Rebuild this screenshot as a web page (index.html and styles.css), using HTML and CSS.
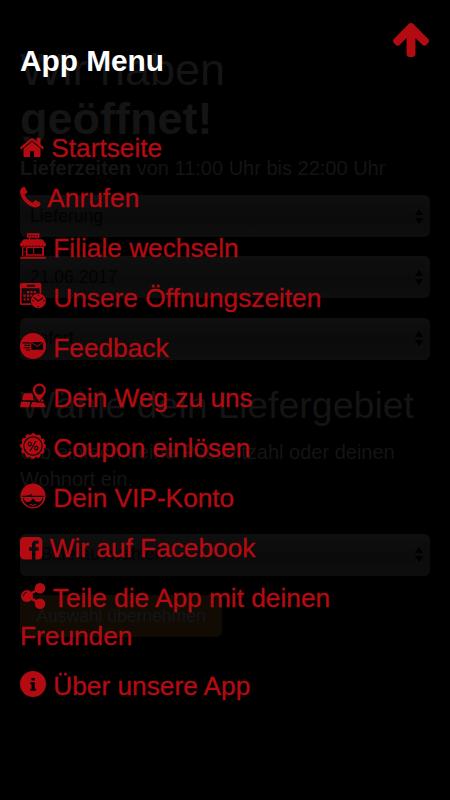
FILE: index.html
```html
<!DOCTYPE html>
<html lang="de">
<head>
<meta charset="utf-8">
<title>App Menu</title>
<link rel="stylesheet" href="styles.css">
</head>
<body>
<main class="page">
  <h1 class="headline">Wir haben <b>geöffnet!</b></h1>
  <p class="hours"><b>Lieferzeiten</b> von 11:00 Uhr bis 22:00 Uhr</p>
  <div class="select"><span>Lieferung</span><i class="arrows"></i></div>
  <div class="select"><span>21.06.2017</span><i class="arrows"></i></div>
  <div class="select"><span>sofort</span><i class="arrows"></i></div>
  <h2 class="subline">Wähle dein Liefergebiet</h2>
  <p class="hint">Gib einfach deine Postleitzahl oder deinen Wohnort ein.</p>
  <div class="select"><span>- Bitte auswählen</span><i class="arrows"></i></div>
  <div class="button">Auswahl übernehmen</div>
</main>
<nav class="menu">
  <div class="close"><svg viewBox="117 192 1558 1472"><path d="M1675 971q0 51-37 90l-75 75q-38 38-91 38-54 0-90-38l-294-293v704q0 52-37.5 84.5t-90.5 32.5h-128q-53 0-90.5-32.5t-37.5-84.5v-704l-294 293q-36 38-90 38t-90-38l-75-75q-38-38-38-90 0-53 38-91l651-651q35-37 90-37 54 0 91 37l651 651q37 39 37 91z"/></svg></div>
  <h3 class="title">App Menu</h3>
  <ul class="list">
    <li><svg class="home" viewBox="97 253 1598 1283"><path d="M1472 992v480q0 26-19 45t-45 19h-384v-384h-256v384h-384q-26 0-45-19t-19-45v-480q0-1 .5-3t.5-3l575-474 575 474q1 2 1 6zm223-69l-62 74q-8 9-21 11h-3q-13 0-21-7l-692-577-692 577q-12 8-24 7-13-2-21-11l-62-74q-8-10-7-23.5t11-21.5l719-599q32-26 76-26t76 26l244 204v-195q0-14 9-23t23-9h192q14 0 23 9t9 23v408l219 182q10 8 11 21.5t-7 23.5z"/></svg> Startseite</li>
    <li><svg class="phone" viewBox="192 128 1408 1408"><path d="M1600 1240q0 27-10 70.5t-21 68.5q-21 50-122 106-94 51-186 51-27 0-53-3.5t-57.5-12.5-47-14.5-55.5-20.5-49-18q-98-35-175-83-127-79-264-216t-216-264q-48-77-83-175-3-9-18-49t-20.5-55.5-14.5-47-12.5-57.5-3.5-53q0-92 51-186 56-101 106-122 25-11 68.5-21t70.5-10q14 0 21 3 18 6 53 76 11 19 30 54t35 63.5 31 53.5q3 4 17.5 25t21.5 35.5 7 28.5q0 20-28.5 50t-62 55-62 53-28.5 46q0 9 5 22.5t8.5 20.5 14 24 11.5 19q76 137 174 235t235 174q2 1 19 11.5t24 14 20.5 8.5 22.5 5q18 0 46-28.5t53-62 55-62 50-28.5q14 0 28.5 7t35.5 21.5 25 17.5q25 15 53.5 31t63.5 35 54 30q70 35 76 53 3 7 3 21z"/></svg> Anrufen</li>
    <li><svg viewBox="0 0 26 26"><path fill-rule="evenodd" d="M7 .3h12.5v4.5H7zM8.5 1.9v1.3h1.4V1.9zm2.6 0v1.3h1.3V1.9zm2.6 0v1.3H15V1.9zm2.6 0v1.3h1.3V1.9z"/><path d="M9 4.5h1v2H9zM16.5 4.5h1v2h-1zM3.5 6.3h19L26 11v1a1.7 1.7 0 0 1-3.3.3 1.8 1.8 0 0 1-3.3 0 1.8 1.8 0 0 1-3.2 0 1.8 1.8 0 0 1-3.2 0 1.8 1.8 0 0 1-3.2 0 1.8 1.8 0 0 1-3.2 0 1.8 1.8 0 0 1-3.3 0A1.7 1.7 0 0 1 0 12v-1z"/><path fill-rule="evenodd" d="M2 13.500h22v9.300H2zM3.400 14.600v8H6v-8zM7.600 15v6.200H22V15z"/><path d="M13.200 15h1v6h-1zM4.600 18h1v1.400h-1zM.3 23.800h25.400v2H.3z"/></svg> Filiale wechseln</li>
    <li><svg viewBox="0 0 26 26"><path fill-rule="evenodd" d="M1.500 0H20q1.300 0 1.300 1.500V22H1.500Q0 22 0 20.500v-19Q0 0 1.500 0zM7 1.800v2h8v-2zM1.600 5.300v15h18v-15z"/><path d="M7 8h2.200v2.200H7zm3.300 0h2.200v2.200h-2.200zm3.400 0h2.200v2.200h-2.200zM3.500 11.500h2.200v2.200H3.500zm3.500 0h2.200v2.200H7zm3.300 0h2.200v2.200h-2.200zM3.500 15.200h2.200v2.200H3.500zm3.500 0h2.200v2.200H7z"/><circle class="gap" cx="18.400" cy="17.700" r="8"/><circle cx="18.400" cy="17.700" r="7.500"/><path class="cut" d="m13.800 14.300 4.300 3.700 5-3.300M18.400 11.500v1.200M18.400 23v1.200M12.300 17.700h1.200M23.300 17.700h1.200"/></svg> Unsere Öffnungszeiten</li>
    <li><svg viewBox="0 0 26 26"><circle cx="13" cy="13" r="13"/><path class="cut" d="M2.500 9.900h7.800M4.200 12.300h6M3.400 14.700h6.800M6 17h4"/><path class="gap" d="M11.200 9h12v7.800h-12z"/><path class="smile" d="m11.300 9 5.900 4.600L23.100 9"/></svg> Feedback</li>
    <li><svg viewBox="0 0 26 26"><path d="M4 10.200h8.500l1.300 7.200-12-.7zM1.100 18.500l9.400.5-1.400 5.300H0zM12 19.100l11.800.8L26 24.300H10.500zM21.500 16.200l1.600.1.800 2.400-3.200-.2z"/><path class="gap" d="M19.200 20 13 9.500a7 7 0 1 1 12.700 0z"/><path fill-rule="evenodd" d="M19.200 19.300c-.8-3.800-6.300-7-6.300-12.300a6.500 6.500 0 1 1 13 0c0 5.300-5.700 8.500-6.700 12.300zM19.400 2.800a4.300 4.300 0 1 0 0 8.600 4.300 4.300 0 0 0 0-8.600z"/></svg> Dein Weg zu uns</li>
    <li><svg viewBox="0 0 26 26"><circle cx="13" cy="13" r="11.400"/><circle class="scallop" cx="13" cy="13" r="10.700"/><circle class="cut" cx="13" cy="13" r="9.200"/><path class="cut" d="m16 8-6 10"/><ellipse class="cut" cx="9.700" cy="11" rx="1.600" ry="2"/><ellipse class="cut" cx="16.300" cy="15.100" rx="1.600" ry="2"/></svg> Coupon einlösen</li>
    <li><svg viewBox="0 0 26 26"><circle cx="13" cy="13" r="12.500"/><path class="gap" d="M2.200 12.700H6q4-.3 6.500-2.200-.5 1.400-1.500 2.200h12.800l-.5 3a10.500 10.500 0 0 1-20.600 0z"/><path d="M2 14h22v1.200h-1.800c-.5 2.500-1.500 3.800-3.800 3.800-2.600 0-4-1.300-4.600-3.300h-1.500C11.700 17.700 10.400 19 7.900 19c-2.400 0-3.500-1.300-4-3.800H2z"/><path class="smile" d="M9.800 21.300q3.300 2 6.500 0"/></svg> Dein VIP-Konto</li>
    <li><svg class="facebook" viewBox="128 128 1536 1536"><path d="M1376 128q119 0 203.500 84.500t84.500 203.500v960q0 119-84.500 203.500t-203.500 84.500h-188v-595h199l30-232h-229v-148q0-56 23.500-84t91.500-28l122-1v-207q-63-9-178-9-136 0-217.500 80t-81.500 226v171h-200v232h200v595h-532q-119 0-203.500-84.500t-84.500-203.500v-960q0-119 84.500-203.500t203.500-84.500h960z"/></svg> Wir auf Facebook</li>
    <li><svg viewBox="0 0 26 26"><path class="link" d="M20 5.200 7 12.900l13 7.800"/><circle cx="20" cy="5.300" r="5.300"/><circle cx="20" cy="20.800" r="5.300"/><circle cx="7" cy="12.900" r="6"/><path class="shine" d="M3.400 13.200q0-3.500 3.300-4"/></svg> Teile die App mit deinen Freunden</li>
    <li><svg viewBox="0 0 26 26"><circle cx="13" cy="13" r="13"/><path class="gap" d="M11.500 6.900h3.300v2.700h-3.300zM10.200 11.300h4.600v6.500h1.300v1.900h-5.900v-1.900h1.300v-4.600h-1.300z"/></svg> Über unsere App</li>
  </ul>
</nav>
</body>
</html>
```

FILE: styles.css
```css
* { box-sizing: border-box; }

body {
  margin: 0;
  height: 800px;
  overflow: hidden;
  position: relative;
  background: #000;
  font-family: "Liberation Sans", Arial, sans-serif;
}

.page {
  padding: 45px 20px 0;
  color: #141414;
}

.headline {
  margin: 0;
  font-size: 45px;
  line-height: 49px;
  font-weight: 400;
}

.headline b { display: block; }

.hours {
  margin: 11px 0 13px;
  font-size: 20px;
  line-height: 28px;
  white-space: nowrap;
}

.select {
  display: flex;
  align-items: center;
  justify-content: space-between;
  height: 42px;
  margin-bottom: 19.3px;
  padding: 0 7px 0 10px;
  border-radius: 6px;
  background: linear-gradient(#0f0f0f, #0b0b0b 55%, #0e0e0e);
  color: #020202;
  font-size: 17.5px;
}

.arrows {
  display: flex;
  flex-direction: column;
  gap: 3px;
}

.arrows::before,
.arrows::after {
  content: "";
  border: 4px solid transparent;
}

.arrows::before { border-top: 0; border-bottom: 6px solid #000; }
.arrows::after { border-bottom: 0; border-top: 6px solid #000; }

.subline {
  margin: 25px 0 0;
  font-size: 37.5px;
  line-height: 41px;
  font-weight: 400;
  white-space: nowrap;
}

.hint {
  margin: 13px 0 40px;
  font-size: 20px;
  line-height: 27.5px;
}

.button {
  width: 202px;
  height: 42px;
  border-radius: 5px;
  background: #110b04;
  color: #14161a;
  font-size: 17.5px;
  line-height: 43px;
  text-align: center;
}

.menu {
  position: absolute;
  inset: 0;
  padding: 23px 20px 0;
  color: #b40b12;
}

.close {
  display: flex;
  justify-content: flex-end;
  height: 21px;
  padding-right: 1px;
}

.close svg {
  flex: none;
  width: 36px;
  height: 34px;
}

.title {
  margin: 0 0 52.4px;
  color: #fff;
  font-size: 29.8px;
  line-height: 34px;
}

.list {
  margin: 0;
  padding: 0;
  list-style: none;
  font-size: 26.25px;
  line-height: 37.14px;
  -webkit-text-stroke: 0.35px #b40b12;
}

.list li { margin-bottom: 12.86px; }

svg { fill: #b40b12; overflow: visible; }

.list svg {
  width: 26px;
  height: 26px;
  vertical-align: -2px;
}

.list .home { width: 24px; height: 19px; vertical-align: 0; }
.list .phone { width: 20.5px; height: 20.5px; margin-right: 1px; vertical-align: 0; }
.list .facebook { width: 22.4px; height: 22.4px; vertical-align: -2px; }

.list .gap { fill: #050505; }
.cut { fill: none; stroke: #050505; stroke-width: 1.1; }
.scallop { fill: none; stroke: #b40b12; stroke-width: 4.6; stroke-linecap: round; stroke-dasharray: 0.1 5.502; }
.smile { fill: none; stroke: #b40b12; stroke-width: 1; }
.link { fill: none; stroke: #b40b12; stroke-width: 2.6; }
.shine { fill: none; stroke: #050505; stroke-width: 1; }
```
